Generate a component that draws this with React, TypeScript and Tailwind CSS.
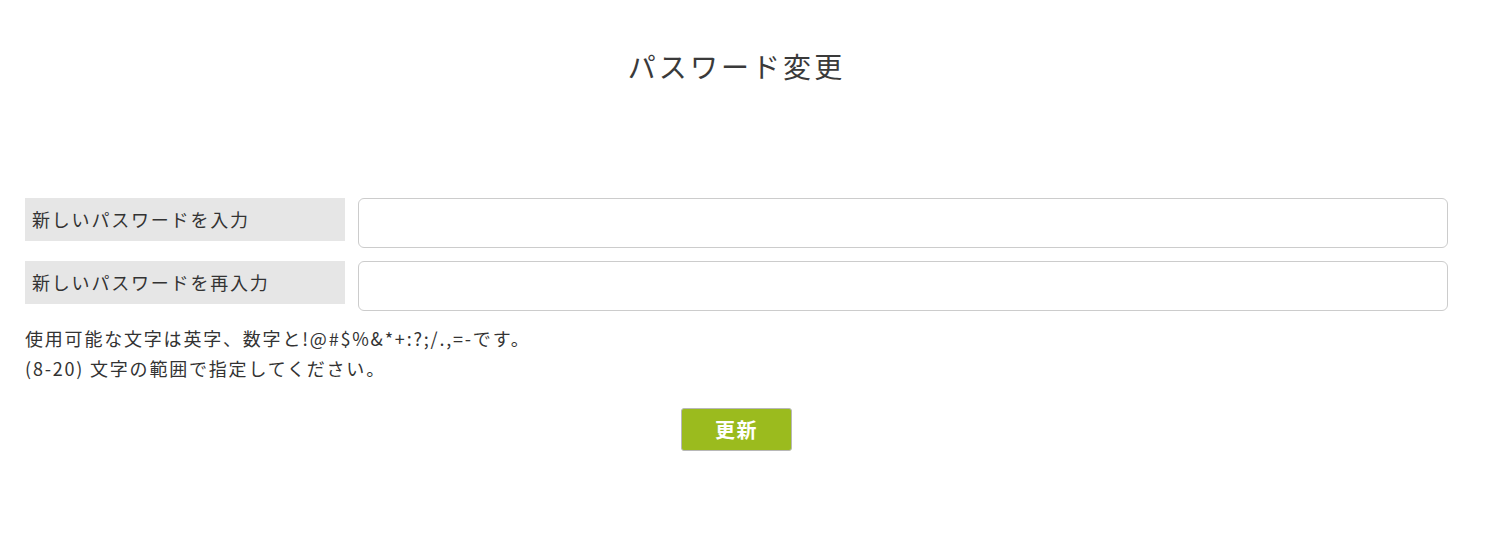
const font = {
  fontFamily: '"Noto Sans CJK JP", "Noto Sans", sans-serif',
};

const Row = ({ label }: { label: string }) => (
  <div className="flex items-start gap-[13px]">
    <div className="flex h-[43px] w-[320px] shrink-0 items-center bg-[#e6e6e6] pl-[7px] text-[18px] tracking-[0.1em] text-[#333333]">
      {label}
    </div>
    <input
      type="password"
      className="h-[50px] flex-1 rounded-[6px] border border-[#cccccc] bg-white px-3 outline-none"
    />
  </div>
);

export default function App() {
  return (
    <div
      className="min-h-[533px] bg-white pl-[25px] pr-[37px] pt-[46px] text-[#333333]"
      style={font}
    >
      <h1 className="text-center text-[28px] leading-[40px] tracking-[0.11em] text-[#3a3a3a]">
        パスワード変更
      </h1>
      <div className="mt-[112px] flex flex-col gap-[13px]">
        <Row label="新しいパスワードを入力" />
        <Row label="新しいパスワードを再入力" />
      </div>
      <div className="mt-[12px] text-[18px] leading-[30px] tracking-[0.1em] text-[#333333]">
        <p>使用可能な文字は英字、数字と!@#$%&amp;*+:?;/.,=-です。</p>
        <p>(8-20) 文字の範囲で指定してください。</p>
      </div>
      <div className="mt-[25px] flex justify-center">
        <button className="h-[43px] w-[111px] rounded-[3px] border border-[#b8b8b8] bg-[#9bbb1e] text-[20px] font-bold tracking-[0.08em] text-white">
          更新
        </button>
      </div>
    </div>
  );
}
